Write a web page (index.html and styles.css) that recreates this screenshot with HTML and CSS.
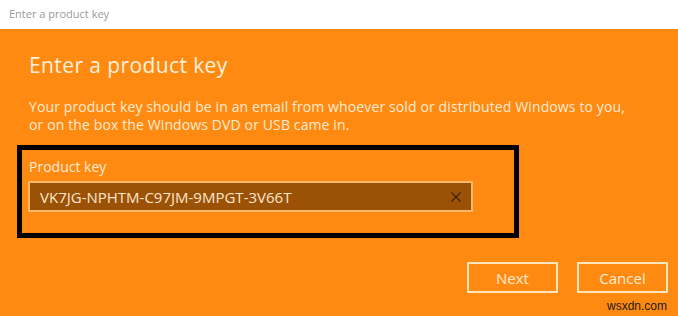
FILE: index.html
```html
<!DOCTYPE html>
<html>
<head>
<meta charset="utf-8">
<link rel="stylesheet" href="styles.css">
</head>
<body>
<div class="titlebar">Enter a product key</div>
<div class="main">
  <h1 class="heading">Enter a product key</h1>
  <p class="desc">Your product key should be in an email from whoever sold or distributed Windows to you,<br>or on the box the Windows DVD or USB came in.</p>
  <div class="keybox">
    <div class="label">Product key</div>
    <div class="input">
      <span class="value">VK7JG-NPHTM-C97JM-9MPGT-3V66T</span>
      <svg class="clear" width="10" height="10" viewBox="0 0 10 10"><path d="M0.5 0.5 L9.5 9.5 M9.5 0.5 L0.5 9.5" stroke="#3a2206" stroke-width="1.1" fill="none"/></svg>
    </div>
  </div>
  <div class="actions">
    <div class="btn">Next</div>
    <div class="btn">Cancel</div>
  </div>
  <div class="watermark">wsxdn.com</div>
</div>
</body>
</html>
```
FILE: styles.css
```css
html, body {
  margin: 0;
  padding: 0;
}
body {
  width: 678px;
  height: 316px;
  overflow: hidden;
  font-family: "Open Sans", "Noto Sans", sans-serif;
  background: #ff8a12;
}
.titlebar {
  height: 29px;
  box-sizing: border-box;
  background: #ffffff;
  color: #9a9a9a;
  font-size: 11px;
  line-height: 28px;
  padding-left: 9px;
}
.main {
  background: #ff8a12;
  height: 287px;
  padding-top: 22px;
  box-sizing: border-box;
}
.heading {
  margin: 0 0 0 29px;
  font-size: 21px;
  font-weight: 400;
  letter-spacing: 0.4px;
  line-height: 28px;
  color: #fff1de;
}
.desc {
  margin: 19px 0 0 29px;
  font-size: 14px;
  letter-spacing: 0.12px;
  line-height: 18px;
  color: #fdebd2;
}
.keybox {
  margin: 11px 0 0 17px;
  width: 502px;
  height: 93px;
  box-sizing: border-box;
  border: 5px solid #000000;
  padding: 8px 0 0 6px;
}
.label {
  font-size: 14px;
  line-height: 18px;
  color: #fdebd2;
  padding-left: 1px;
}
.input {
  margin-top: 5px;
  width: 445px;
  height: 31px;
  box-sizing: border-box;
  border: 2px solid #ffb86a;
  background: #9b5207;
  display: flex;
  align-items: center;
  justify-content: space-between;
  padding: 0 10px 0 10px;
}
.value {
  font-size: 15px;
  color: #fbe6cc;
}
.clear {
  display: block;
}
.actions {
  margin-top: 24px;
  display: flex;
  justify-content: flex-end;
  gap: 19px;
  padding-right: 10px;
}
.btn {
  width: 91px;
  height: 31px;
  box-sizing: border-box;
  border: 2px solid #fde6bd;
  color: #fdebd2;
  font-size: 15px;
  display: flex;
  align-items: center;
  justify-content: center;
}
.watermark {
  margin-top: 6px;
  text-align: right;
  padding-right: 11px;
  font-family: "Liberation Sans", Arial, sans-serif;
  font-size: 12px;
  line-height: 14px;
  color: #1a1a1a;
}
```
